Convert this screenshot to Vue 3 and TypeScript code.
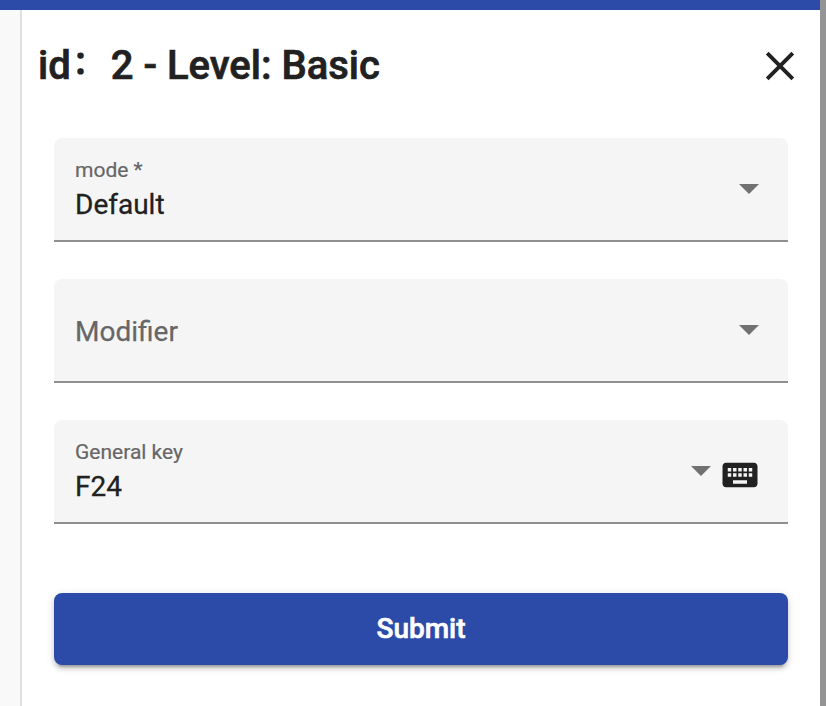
<script setup lang="ts">
interface Field {
  label: string
  value: string
  required?: boolean
  keyboard?: boolean
}

const fields: Field[] = [
  { label: 'mode', value: 'Default', required: true },
  { label: 'Modifier', value: '' },
  { label: 'General key', value: 'F24', keyboard: true },
]
</script>

<template>
  <div class="page">
    <div class="main">
      <div class="toolbar"></div>
      <div class="body">
        <div class="rail"></div>
        <section class="panel">
          <header class="head">
            <h2 class="title">id<span class="colon">：</span>2 - Level: Basic</h2>
            <button class="close" aria-label="Close">
              <svg width="30" height="30" viewBox="0 0 30 30">
                <path d="M2.2 2.2 27.8 27.8M27.8 2.2 2.2 27.8" stroke="#212121" stroke-width="3.9" fill="none" />
              </svg>
            </button>
          </header>
          <form class="form" @submit.prevent>
            <div v-for="f in fields" :key="f.label" class="field">
              <div v-if="f.value" class="text">
                <span class="label">{{ f.label }}<template v-if="f.required"> *</template></span>
                <span class="value">{{ f.value }}</span>
              </div>
              <span v-else class="placeholder">{{ f.label }}</span>
              <svg class="arrow" width="20" height="10" viewBox="0 0 20 10">
                <path d="M0 0h20L10 10z" fill="#717171" />
              </svg>
              <svg v-if="f.keyboard" class="keyboard" width="42" height="42" viewBox="0 0 24 24">
                <path
                  fill="#212121"
                  d="M20 5H4c-1.1 0-1.99.9-1.99 2L2 17c0 1.100.9 2 2 2h16c1.100 0 2-.9 2-2V7c0-1.100-.9-2-2-2zm-9 3h2v2h-2V8zm0 3h2v2h-2v-2zM8 8h2v2H8V8zm0 3h2v2H8v-2zm-1 2H5v-2h2v2zm0-3H5V8h2v2zm9 7H8v-2h8v2zm0-4h-2v-2h2v2zm0-3h-2V8h2v2zm3 3h-2v-2h2v2zm0-3h-2V8h2v2z"
                />
              </svg>
            </div>
            <button class="submit">Submit</button>
          </form>
        </section>
      </div>
    </div>
    <div class="edge"></div>
  </div>
</template>

<style>
body {
  background: #fff;
  overflow: hidden;
}
</style>

<style scoped>
.page {
  display: flex;
  height: 706px;
  font-family: Roboto, "Noto Sans CJK SC", sans-serif;
  color: #212121;
}
.main {
  flex: 1;
  display: flex;
  flex-direction: column;
}
.edge {
  width: 6px;
  background: #949494;
}
.toolbar {
  height: 10px;
  background: #2c4aa8;
}
.body {
  flex: 1;
  display: flex;
}
.rail {
  width: 20px;
  background: #f9f9f9;
  border-right: 2px solid #e0e0e0;
}
.panel {
  flex: 1;
}
.head {
  display: flex;
  justify-content: space-between;
  align-items: center;
  height: 112px;
  padding: 0 25px 0 16px;
}
.title {
  margin: 0;
  font-size: 40px;
  font-weight: 500;
  line-height: 60px;
  white-space: nowrap;
  -webkit-text-stroke: 0.7px currentColor;
}
.colon {
  display: inline-block;
  box-sizing: border-box;
  width: 40px;
  padding-left: 2px;
  font-size: 31px;
  line-height: 1;
  vertical-align: 6px;
  -webkit-text-stroke: 1.2px currentColor;
}
button {
  border: 0;
  padding: 0;
  background: none;
  font-family: inherit;
}
.close {
  display: flex;
}
.form {
  display: flex;
  flex-direction: column;
  padding: 16px 32px 0;
}
.field {
  display: flex;
  align-items: center;
  box-sizing: border-box;
  height: 104px;
  margin-bottom: 37px;
  padding: 0 29px 0 21px;
  background: #f5f5f5;
  border-bottom: 2px solid #8f8f8f;
  border-radius: 8px 8px 0 0;
}
.text {
  display: flex;
  flex-direction: column;
  flex: 1;
  padding-top: 3px;
}
.label {
  font-size: 21px;
  line-height: 28px;
  color: #666;
  -webkit-text-stroke: 0.2px currentColor;
}
.value {
  font-size: 28px;
  line-height: 41px;
  -webkit-text-stroke: 0.3px currentColor;
}
.placeholder {
  flex: 1;
  padding-top: 2px;
  font-size: 28px;
  color: #666;
  -webkit-text-stroke: 0.25px currentColor;
}
.arrow {
  flex: none;
}
.keyboard {
  flex: none;
  margin: 7px -2px 0 8px;
}
.submit {
  height: 72px;
  margin-top: 32px;
  padding-bottom: 2px;
  border-radius: 8px;
  background: #2c4aa8;
  color: #fff;
  font-size: 28px;
  font-weight: 500;
  -webkit-text-stroke: 0.6px currentColor;
  box-shadow: 0 6px 2px -4px rgba(0, 0, 0, 0.2), 0 4px 4px rgba(0, 0, 0, 0.14), 0 2px 10px rgba(0, 0, 0, 0.12);
}
</style>
